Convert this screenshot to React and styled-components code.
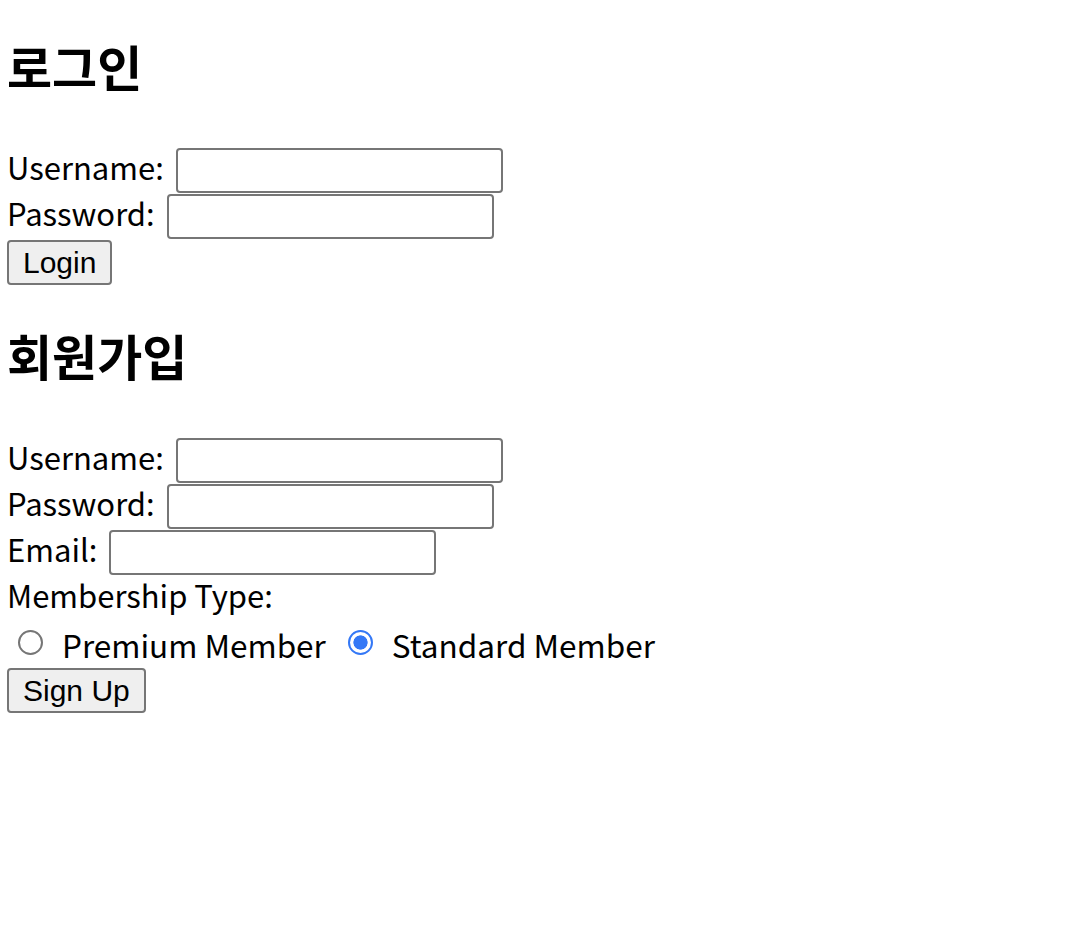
import React, { useState } from "react";
import styled, { createGlobalStyle } from "styled-components";

const GlobalStyle = createGlobalStyle`
  html, body {
    margin: 0;
    padding: 0;
    background: #fff;
  }
  body {
    font-family: "Noto Sans CJK KR", "Noto Sans", sans-serif;
    color: #000;
  }
`;

const Page = styled.div`
  padding: 0 7px;
`;

const Section = styled.section`
  display: flex;
  flex-direction: column;
  align-items: flex-start;
`;

const Title = styled.h2`
  font-family: "Noto Sans CJK KR", sans-serif;
  font-size: 49px;
  font-weight: 700;
  line-height: 56px;
  margin: ${(p) => p.$top}px 0 ${(p) => p.$bottom}px;
`;

const Row = styled.div`
  display: flex;
  align-items: center;
  height: 46px;
  gap: 12px;
`;

const Label = styled.label`
  font-size: 31px;
  line-height: 46px;
  margin-bottom: 6px;
`;

const Input = styled.input`
  box-sizing: border-box;
  width: 327px;
  height: 45px;
  border: 2px solid #767676;
  border-radius: 4px;
  background: #fff;
  padding: 2px 6px;
  font-size: 26px;
  outline: none;
`;

const Button = styled.button`
  box-sizing: border-box;
  height: 45px;
  padding: 0 14px;
  margin-top: 1px;
  border: 2px solid #767676;
  border-radius: 4px;
  background: #efefef;
  font-family: "Liberation Sans", Arial, sans-serif;
  font-size: 30px;
  color: #000;
`;

const RadioRow = styled.div`
  display: flex;
  align-items: center;
  height: 46px;
  padding-left: 11px;
`;

const RadioOption = styled.label`
  display: flex;
  align-items: center;
  gap: 19px;
  margin-right: 22px;
  font-size: 31.5px;
  line-height: 46px;
`;

const RadioDot = styled.input.attrs({ type: "radio" })`
  appearance: none;
  box-sizing: border-box;
  margin: 0 0 4px;
  width: 25px;
  height: 25px;
  border-radius: 50%;
  border: ${(p) => (p.checked ? "2.5px solid #3478f6" : "2px solid #767676")};
  background: ${(p) =>
    p.checked ? "radial-gradient(circle, #3478f6 0 6.8px, #fff 7.4px)" : "#fff"};
`;

export default function App() {
  const [membership, setMembership] = useState("standard");

  return (
    <Page>
      <GlobalStyle />
      <Section>
        <Title $top={38} $bottom={53}>로그인</Title>
        <Row>
          <Label>Username:</Label>
          <Input type="text" />
        </Row>
        <Row>
          <Label>Password:</Label>
          <Input type="password" />
        </Row>
        <Button>Login</Button>
      </Section>
      <Section>
        <Title $top={42} $bottom={54}>회원가입</Title>
        <Row>
          <Label>Username:</Label>
          <Input type="text" />
        </Row>
        <Row>
          <Label>Password:</Label>
          <Input type="password" />
        </Row>
        <Row>
          <Label>Email:</Label>
          <Input type="email" />
        </Row>
        <Row>
          <Label>Membership Type:</Label>
        </Row>
        <RadioRow>
          <RadioOption>
            <RadioDot
              name="membership"
              checked={membership === "premium"}
              onChange={() => setMembership("premium")}
            />
            Premium Member
          </RadioOption>
          <RadioOption>
            <RadioDot
              name="membership"
              checked={membership === "standard"}
              onChange={() => setMembership("standard")}
            />
            Standard Member
          </RadioOption>
        </RadioRow>
        <Button>Sign Up</Button>
      </Section>
    </Page>
  );
}
